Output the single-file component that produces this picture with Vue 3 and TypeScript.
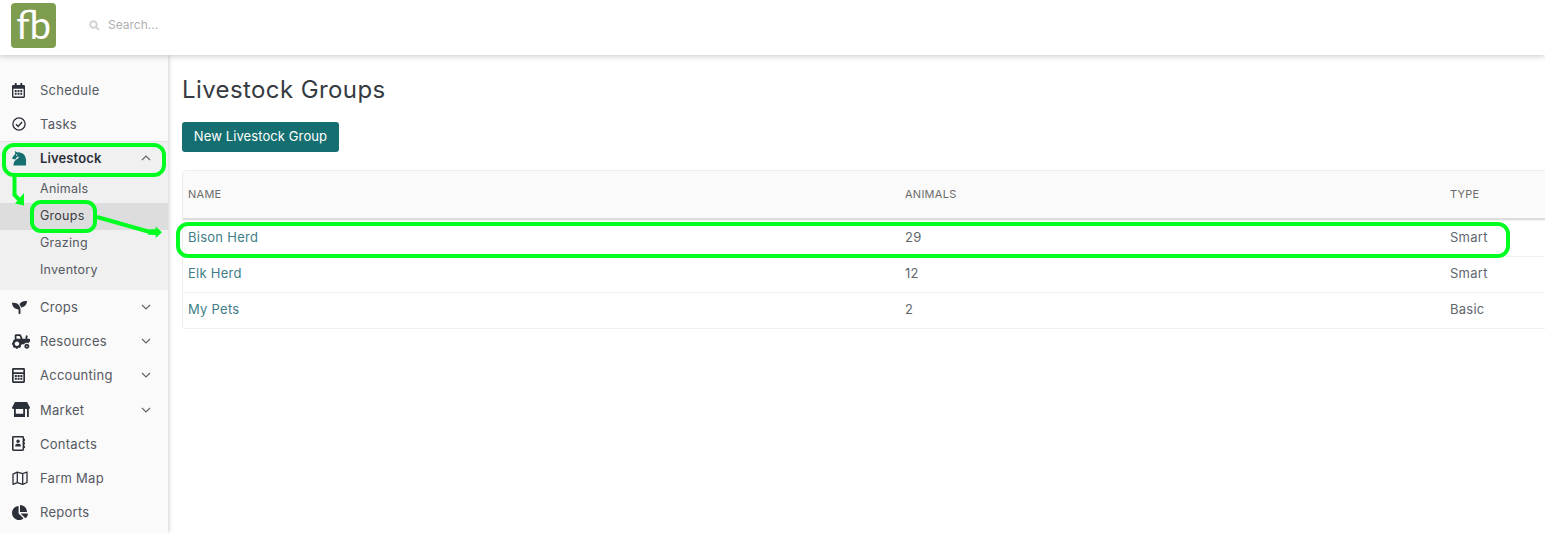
<template>
  <div class="page">
    <header class="topbar">
      <div class="logo">fb</div>
      <div class="search">
        <svg class="search__icon" viewBox="0 0 16 16" aria-hidden="true">
          <circle cx="6.500" cy="6.500" r="4.800" />
          <path d="M10 10l4.500 4.500" />
        </svg>
        <span>Search...</span>
      </div>
    </header>

    <div class="body">
      <aside class="sidebar">
        <template v-for="item in nav" :key="item.label">
          <div class="nav-item" :class="{ 'nav-item--open': item.children }">
            <span class="nav-item__icon">
              <svg :viewBox="item.box" :width="item.w" :height="item.h" v-html="item.icon" />
            </span>
            <span class="nav-item__label">{{ item.label }}</span>
            <svg v-if="item.caret" class="nav-item__caret" viewBox="0 0 10 6">
              <path :d="item.children ? 'M1 5l4-4 4 4' : 'M1 1l4 4 4-4'" />
            </svg>
          </div>
          <div v-if="item.children" class="subnav">
            <div
              v-for="child in item.children"
              :key="child"
              class="subnav__item"
              :class="{ 'subnav__item--active': child === 'Groups' }"
            >
              {{ child }}
            </div>
          </div>
        </template>
      </aside>

      <main class="content">
        <h1 class="title">Livestock Groups</h1>
        <button class="btn">New Livestock Group</button>
        <div class="table">
          <div class="row row--head">
            <div>Name</div>
            <div>Animals</div>
            <div>Type</div>
          </div>
          <div v-for="g in groups" :key="g.name" class="row">
            <div class="link">{{ g.name }}</div>
            <div>{{ g.animals }}</div>
            <div>{{ g.type }}</div>
          </div>
        </div>
      </main>
    </div>

    <!-- hand drawn green annotations sitting on top of the screenshot -->
    <svg class="marks" viewBox="0 0 1545 533" aria-hidden="true">
      <rect x="4" y="145" width="160" height="30" rx="10" />
      <rect x="32" y="202" width="63" height="29" rx="9" />
      <rect x="178" y="224" width="1330" height="32" rx="10" />
      <path d="M14.500 175v20l7 7" />
      <path class="fill" d="M24 193v12.500l-9-2z" />
      <path d="M97 217l53 15" />
      <path class="fill" d="M148 229.500l7.700-.5v-2.500l6.300 5.700-6.300 5.800v-3l-7.700-.2z" />
    </svg>
  </div>
</template>

<script setup lang="ts">
interface NavItem {
  label: string;
  box: string;
  w: number;
  h: number;
  icon: string;
  caret?: boolean;
  children?: string[];
}

const nav: NavItem[] = [
  {
    label: "Schedule",
    box: "0 0 14 16",
    w: 13,
    h: 15,
    icon: '<path fill="#2b2f38" fill-rule="evenodd" d="M3 0h2v2h4V0h2v2h1.500A1.500 1.500 0 0 1 14 3.500v11a1.500 1.500 0 0 1-1.500 1.500h-11A1.500 1.500 0 0 1 0 14.500v-11A1.500 1.500 0 0 1 1.500 2H3zM1.500 6v8.500h11V6z"/><path fill="#2b2f38" d="M3 7.500h2v2H3zM6 7.500h2v2H6zM9 7.500h2v2H9zM3 10.500h2v2H3zM6 10.500h2v2H6zM9 10.500h2v2H9z"/>',
  },
  {
    label: "Tasks",
    box: "0 0 16 16",
    w: 14,
    h: 14,
    icon: '<circle cx="8" cy="8" r="7" fill="none" stroke="#2b2f38" stroke-width="1.500"/><path d="M4.500 8.300l2.500 2.500 4.500-5" fill="none" stroke="#2b2f38" stroke-width="1.600"/>',
  },
  {
    label: "Livestock",
    box: "0 0 16 16",
    w: 15,
    h: 16,
    caret: true,
    children: ["Animals", "Groups", "Grazing", "Inventory"],
    icon: '<path fill="#156f70" d="M1.500 16C1.500 12 3.500 10 6.800 8.300L7.200 6 5 7.200c-.5 1-1 1.800-1.500 2.300L1 9c-.8-.4-1-1-.6-1.600L3.500 3.500 3 .5 6 2c5-.5 9 3.500 9 8.500V16z"/><circle cx="5" cy="4.800" r=".7" fill="#f0f0f0"/>',
  },
  {
    label: "Crops",
    box: "0 0 512 512",
    w: 15,
    h: 15,
    caret: true,
    icon: '<path fill="#2b2f38" d="M64 96H0c0 123.700 100.300 224 224 224v144c0 8.800 7.200 16 16 16h32c8.800 0 16-7.200 16-16V320C288 196.300 187.700 96 64 96zm384-64c-84.200 0-157.400 46.500-195.700 115.200 27.700 30.200 48.200 66.900 59 107.600C424 243.100 512 147.900 512 32h-64z"/>',
  },
  {
    label: "Resources",
    box: "0 0 640 512",
    w: 18,
    h: 15,
    caret: true,
    icon: '<path fill="#2b2f38" d="M528 336c-48.600 0-88 39.400-88 88s39.400 88 88 88 88-39.400 88-88-39.400-88-88-88zm0 112c-13.230 0-24-10.770-24-24s10.770-24 24-24 24 10.770 24 24-10.770 24-24 24zm80-288h-64v-40.200c0-14.120 4.700-27.760 13.150-38.840 4.420-5.800 3.550-14.060-1.320-19.490L534.200 37.300c-6.660-7.450-18.320-6.920-24.700.78C490.580 60.900 480 89.810 480 119.800V160H377.670L321.580 29.140A47.914 47.914 0 0 0 277.450 0H144c-26.470 0-48 21.530-48 48v146.520c-8.630-6.730-20.960-6.460-28.890 1.470L36 227.100c-8.590 8.590-8.590 22.520 0 31.110l5.060 5.060c-4.990 9.260-8.960 18.820-11.910 28.720H22c-12.150 0-22 9.850-22 22v44c0 12.150 9.850 22 22 22h7.140c2.960 9.910 6.920 19.460 11.910 28.720l-5.060 5.060c-8.590 8.590-8.590 22.520 0 31.110L67.100 476c8.590 8.590 22.520 8.590 31.110 0l5.060-5.060c9.260 4.990 18.820 8.960 28.720 11.910V490c0 12.150 9.850 22 22 22h44c12.150 0 22-9.850 22-22v-7.140c9.900-2.950 19.460-6.920 28.720-11.910l5.060 5.060c8.590 8.590 22.520 8.590 31.110 0l31.110-31.110c8.590-8.590 8.590-22.520 0-31.110l-5.060-5.060c4.990-9.260 8.960-18.820 11.910-28.720H330c12.150 0 22-9.850 22-22v-6h80.540c21.910-28.990 56.320-48 95.460-48 18.640 0 36.070 4.610 51.800 12.200l50.820-50.820c6-6 9.370-14.140 9.370-22.630V192c.01-17.670-14.320-32-31.990-32zM176 416c-44.180 0-80-35.820-80-80s35.820-80 80-80 80 35.820 80 80-35.820 80-80 80zm22-256h-38V64h106.890l41.150 96H198z"/>',
  },
  {
    label: "Accounting",
    box: "0 0 14 16",
    w: 13,
    h: 15,
    caret: true,
    icon: '<path fill="#2b2f38" fill-rule="evenodd" d="M1.500 0h11A1.500 1.500 0 0 1 14 1.500v13a1.500 1.500 0 0 1-1.500 1.500h-11A1.500 1.500 0 0 1 0 14.500v-13A1.500 1.500 0 0 1 1.500 0zm.3 1.800v2.700h10.400V1.800zm0 4.700v7.700h10.400V6.500z"/><path fill="#2b2f38" d="M3 7.500h2.200v2H3zM6 7.500h2.200v2H6zM9 7.500h2.200v2H9zM3 10.500h2.200v2H3zM6 10.500h2.200v2H6zM9 10.500h2.200v2H9z"/>',
  },
  {
    label: "Market",
    box: "0 0 18 15",
    w: 18,
    h: 15,
    caret: true,
    icon: '<path fill="#2b2f38" d="M3 0h12l3 5.500a1.500 1.500 0 0 1-1.500 1.500h-15A1.500 1.500 0 0 1 0 5.500z"/><path fill="#2b2f38" d="M2 7h1.800v4.700h7.400V7H13v8H2zM15 7h1.800v8H15z"/>',
  },
  {
    label: "Contacts",
    box: "0 0 14 16",
    w: 13,
    h: 15,
    icon: '<path fill="#2b2f38" fill-rule="evenodd" d="M1.500 0H11.500A1.500 1.500 0 0 1 13 1.500v13a1.500 1.500 0 0 1-1.500 1.500h-10A1.500 1.500 0 0 1 0 14.500v-13A1.500 1.500 0 0 1 1.500 0zm.2 1.600v12.800h9.700V1.600z"/><path fill="#2b2f38" d="M13 3h1v2.500h-1zM13 6.700h1v2.500h-1zM13 10.400h1v2.500h-1zM3.500 10.200c0-1.300 1-2 3-2s3 .7 3 2v1h-6z"/><circle cx="6.500" cy="5.600" r="1.800" fill="#2b2f38"/>',
  },
  {
    label: "Farm Map",
    box: "0 0 16 14",
    w: 16,
    h: 14,
    icon: '<path fill="none" stroke="#2b2f38" stroke-width="1.300" stroke-linejoin="round" d="M1 3.200L5.300 1.200 10.700 2.700 15 1v10.500l-4.300 1.800-5.400-1.600L1 13.300zM5.300 1.200v10.500M10.700 2.700v10.600"/>',
  },
  {
    label: "Reports",
    box: "0 0 544 512",
    w: 16,
    h: 15,
    icon: '<path fill="#2b2f38" d="M527.790 288H290.500l158.030 158.030c6.040 6.040 15.980 6.530 22.190.68 38.700-36.460 65.320-85.610 73.130-140.860 1.340-9.460-6.510-17.850-16.060-17.850zm-15.830-64.800C503.720 103.740 408.260 8.280 288.800.04 279.680-.59 272 7.100 272 16.240V240h223.770c9.140 0 16.820-7.680 16.190-16.800zM224 288V50.710c0-9.550-8.390-17.400-17.840-16.060C86.990 51.490-4.100 155.600.14 280.370 4.500 408.510 114.830 513.590 243.030 511.980c50.400-.63 96.970-16.870 135.260-44.030 7.900-5.600 8.420-17.230 1.570-24.080L224 288z"/>',
  },
];

const groups = [
  { name: "Bison Herd", animals: 29, type: "Smart" },
  { name: "Elk Herd", animals: 12, type: "Smart" },
  { name: "My Pets", animals: 2, type: "Basic" },
];
</script>

<style>
html,
body {
  margin: 0;
  overflow: hidden;
  background: #fff;
}
</style>

<style scoped>
.page {
  position: relative;
  width: 1545px;
  height: 533px;
  overflow: hidden;
  font-family: Inter, "Liberation Sans", sans-serif;
  font-size: 13px;
  letter-spacing: 0.02em;
  color: #555962;
}

.topbar {
  position: relative;
  z-index: 2;
  display: flex;
  align-items: flex-start;
  height: 55px;
  box-sizing: border-box;
  padding: 3px 0 0 11px;
  background: #fff;
  box-shadow: 0 1px 6px rgba(0, 0, 0, 0.22);
}
.logo {
  width: 45px;
  height: 45px;
  border-radius: 4px;
  background: #7f9d4f;
  color: #fff;
  font-family: Lato, sans-serif;
  font-size: 38px;
  font-weight: 400;
  letter-spacing: 0;
  line-height: 43px;
  text-align: center;
}
.search {
  display: flex;
  align-items: center;
  gap: 8px;
  height: 42px;
  margin-left: 33px;
  color: #b0b0b0;
  font-size: 12px;
  letter-spacing: 0;
}
.search__icon {
  width: 11px;
  height: 11px;
  margin-top: 3px;
  fill: none;
  stroke: #d2d2d2;
  stroke-width: 2.800;
}

.body {
  display: flex;
  height: 478px;
}

.sidebar {
  flex: none;
  width: 168px;
  box-sizing: border-box;
  padding-top: 18px;
  background: #fafafa;
  box-shadow: 1px 0 4px rgba(0, 0, 0, 0.18);
}
.nav-item {
  display: flex;
  align-items: center;
  height: 34.200px;
  padding-left: 12px;
}
.nav-item--open {
  background: #f0f0f0;
  box-shadow: inset 0 1px 0 #e4e4e4;
  color: #2b2f38;
  font-weight: 600;
  letter-spacing: 0.01em;
}
.nav-item__icon {
  display: flex;
  flex: none;
  width: 28px;
}
.nav-item__label {
  flex: 1;
}
.nav-item__caret {
  width: 10px;
  height: 6px;
  margin-right: 17px;
  fill: none;
  stroke: #666;
  stroke-width: 1.200;
}

.subnav {
  height: 114.400px;
  background: #f0f0f0;
}
.subnav__item {
  height: 27px;
  padding-left: 40px;
  font-size: 12.500px;
  line-height: 25px;
}
.subnav__item--active {
  background: #ddd;
  color: #3a3e46;
}

.content {
  flex: 1;
  min-width: 0;
  padding: 20px 0 0 14px;
}
.title {
  margin: 0 0 17px;
  color: #363a42;
  font-size: 24px;
  font-weight: 400;
  letter-spacing: 0.4px;
  line-height: 30px;
}
.btn {
  display: block;
  width: 157px;
  height: 30px;
  padding: 0 0 3px;
  border: 0;
  border-radius: 3px;
  background: #156f70;
  color: #fff;
  font: inherit;
  letter-spacing: 0.1px;
}

.table {
  width: 1400px;
  margin-top: 18px;
  border: 1px solid #eee;
  border-radius: 3px;
}
.row {
  display: grid;
  grid-template-columns: 717px 545px 1fr;
  align-items: center;
  height: 36px;
  box-sizing: border-box;
  padding: 0 0 4px 5px;
  border-top: 1px solid #f2f2f2;
  color: #62666e;
}
.row--head {
  height: 49px;
  padding-bottom: 1px;
  border-top: 0;
  border-bottom: 2px solid #ddd;
  background: #fafafa;
  font-size: 11px;
  text-transform: uppercase;
  color: #6c6c6c;
}
.link {
  color: #3f7d88;
}

.marks {
  position: absolute;
  inset: 0;
  z-index: 3;
  width: 1545px;
  height: 533px;
  fill: none;
  stroke: #00ff21;
  stroke-width: 4;
  pointer-events: none;
}
.marks .fill {
  fill: #00ff21;
  stroke: none;
}
</style>
